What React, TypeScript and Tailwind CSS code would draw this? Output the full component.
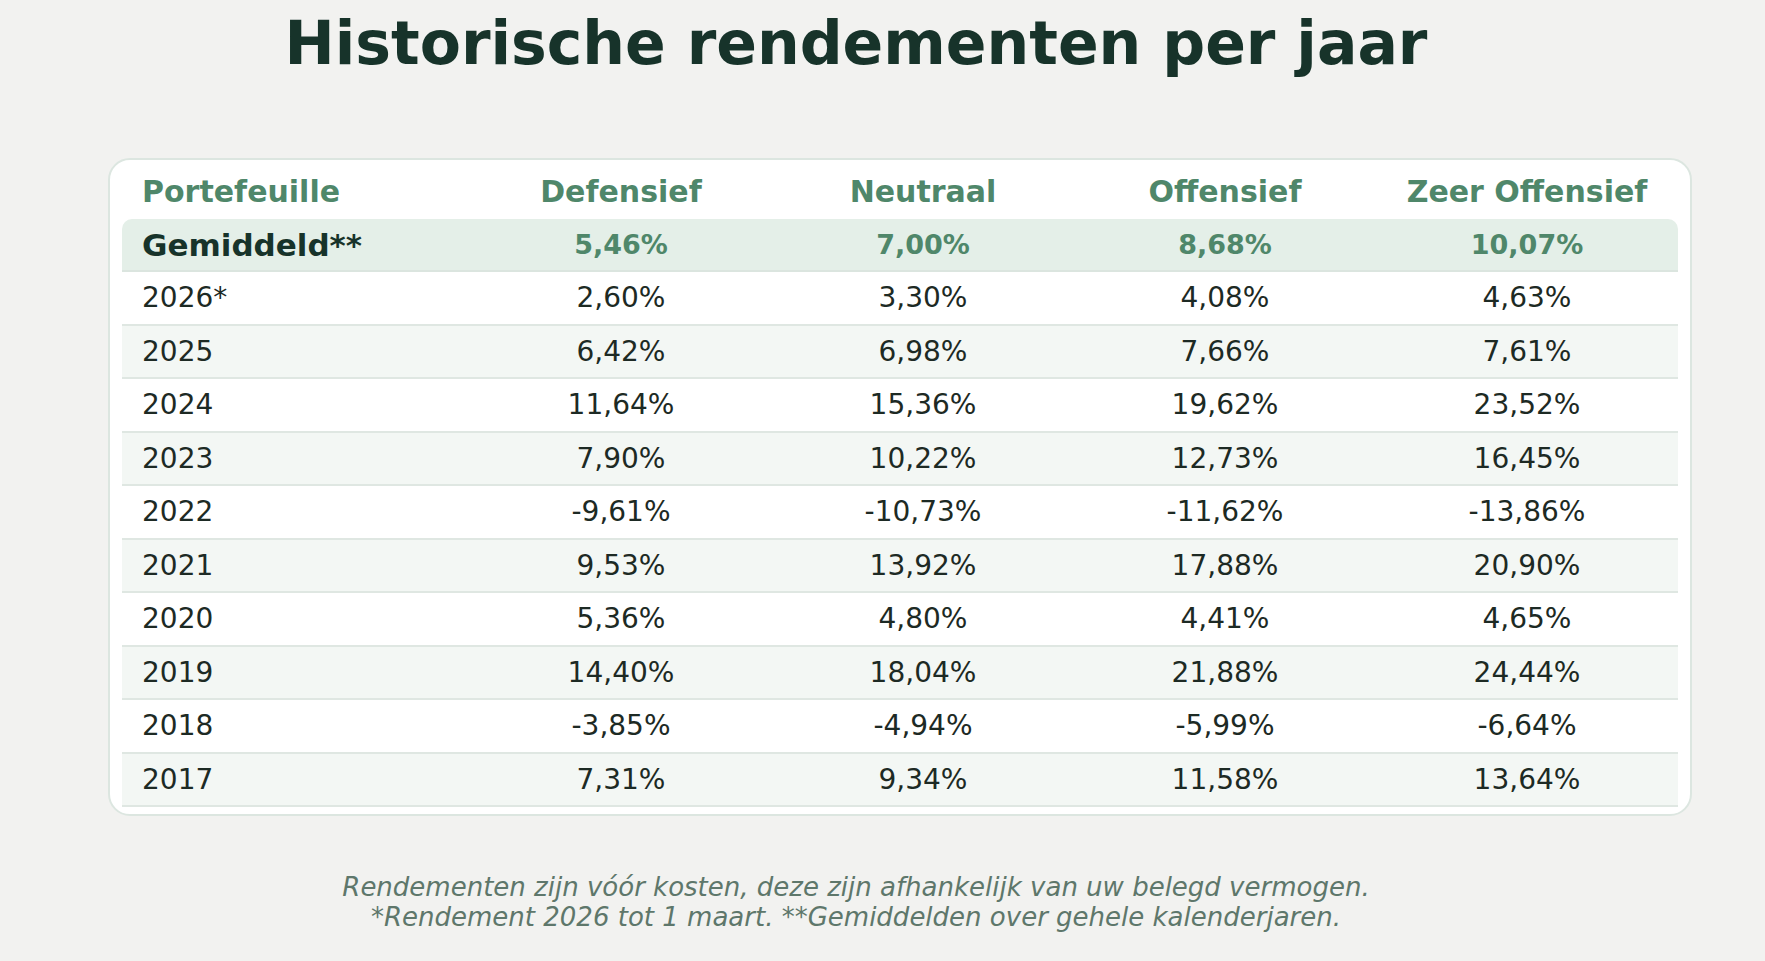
import React from 'react';

type Row = { label: string; values: string[] };

const columns = ['Defensief', 'Neutraal', 'Offensief', 'Zeer Offensief'];

const average: Row = { label: 'Gemiddeld**', values: ['5,46%', '7,00%', '8,68%', '10,07%'] };

const rows: Row[] = [
  { label: '2026*', values: ['2,60%', '3,30%', '4,08%', '4,63%'] },
  { label: '2025', values: ['6,42%', '6,98%', '7,66%', '7,61%'] },
  { label: '2024', values: ['11,64%', '15,36%', '19,62%', '23,52%'] },
  { label: '2023', values: ['7,90%', '10,22%', '12,73%', '16,45%'] },
  { label: '2022', values: ['-9,61%', '-10,73%', '-11,62%', '-13,86%'] },
  { label: '2021', values: ['9,53%', '13,92%', '17,88%', '20,90%'] },
  { label: '2020', values: ['5,36%', '4,80%', '4,41%', '4,65%'] },
  { label: '2019', values: ['14,40%', '18,04%', '21,88%', '24,44%'] },
  { label: '2018', values: ['-3,85%', '-4,94%', '-5,99%', '-6,64%'] },
  { label: '2017', values: ['7,31%', '9,34%', '11,58%', '13,64%'] },
];

const App: React.FC = () => {
  return (
    <div className="min-h-[961px] bg-[#f2f2f0] font-['DejaVu_Sans',sans-serif] leading-[normal]">
      <div className="w-[1712px] pt-[8px]">
        <h1 className="text-center text-[60px] font-bold text-[#17332a] leading-[normal]">
          Historische rendementen per jaar
        </h1>
      </div>

      {/* Returns table */}
      <div className="ml-[108px] mt-[80px] w-[1584px] rounded-[22px] border-2 border-[#dce6e0] bg-white px-3 pt-[10px] pb-[7px]">
        <div className="grid h-[49px] grid-cols-[348px_1fr_1fr_1fr_1fr] items-start pt-1 text-[30px] font-bold text-[#4f876a]">
          <div className="pl-5">Portefeuille</div>
          {columns.map(c => (
            <div key={c} className="flex justify-center whitespace-nowrap">{c}</div>
          ))}
        </div>

        <div className="grid h-[53px] grid-cols-[348px_1fr_1fr_1fr_1fr] items-center rounded-t-[10px] border-b-2 border-[#dbe5df] bg-[#e4efe8]">
          <div className="pl-5 text-[31px] font-bold text-[#17332a]">{average.label}</div>
          {average.values.map((v, i) => (
            <div key={i} className="flex justify-center text-[27px] font-bold text-[#4f876a]">{v}</div>
          ))}
        </div>

        {rows.map((row, idx) => (
          <div
            key={row.label}
            className={`grid h-[53.5px] grid-cols-[348px_1fr_1fr_1fr_1fr] items-center border-b-2 border-[#dfe7e2] text-[28px] text-[#1d2a24] ${
              idx % 2 === 1 ? 'bg-[#f3f7f4]' : 'bg-white'
            }`}
          >
            <div className="pl-5">{row.label}</div>
            {row.values.map((v, i) => (
              <div key={i} className="flex justify-center">{v}</div>
            ))}
          </div>
        ))}
      </div>

      <div className="mt-[56px] w-[1712px] text-center text-[26px] italic text-[#5e776b]">
        <p>Rendementen zijn vóór kosten, deze zijn afhankelijk van uw belegd vermogen.</p>
        <p>*Rendement 2026 tot 1 maart. **Gemiddelden over gehele kalenderjaren.</p>
      </div>
    </div>
  );
};

export default App;
